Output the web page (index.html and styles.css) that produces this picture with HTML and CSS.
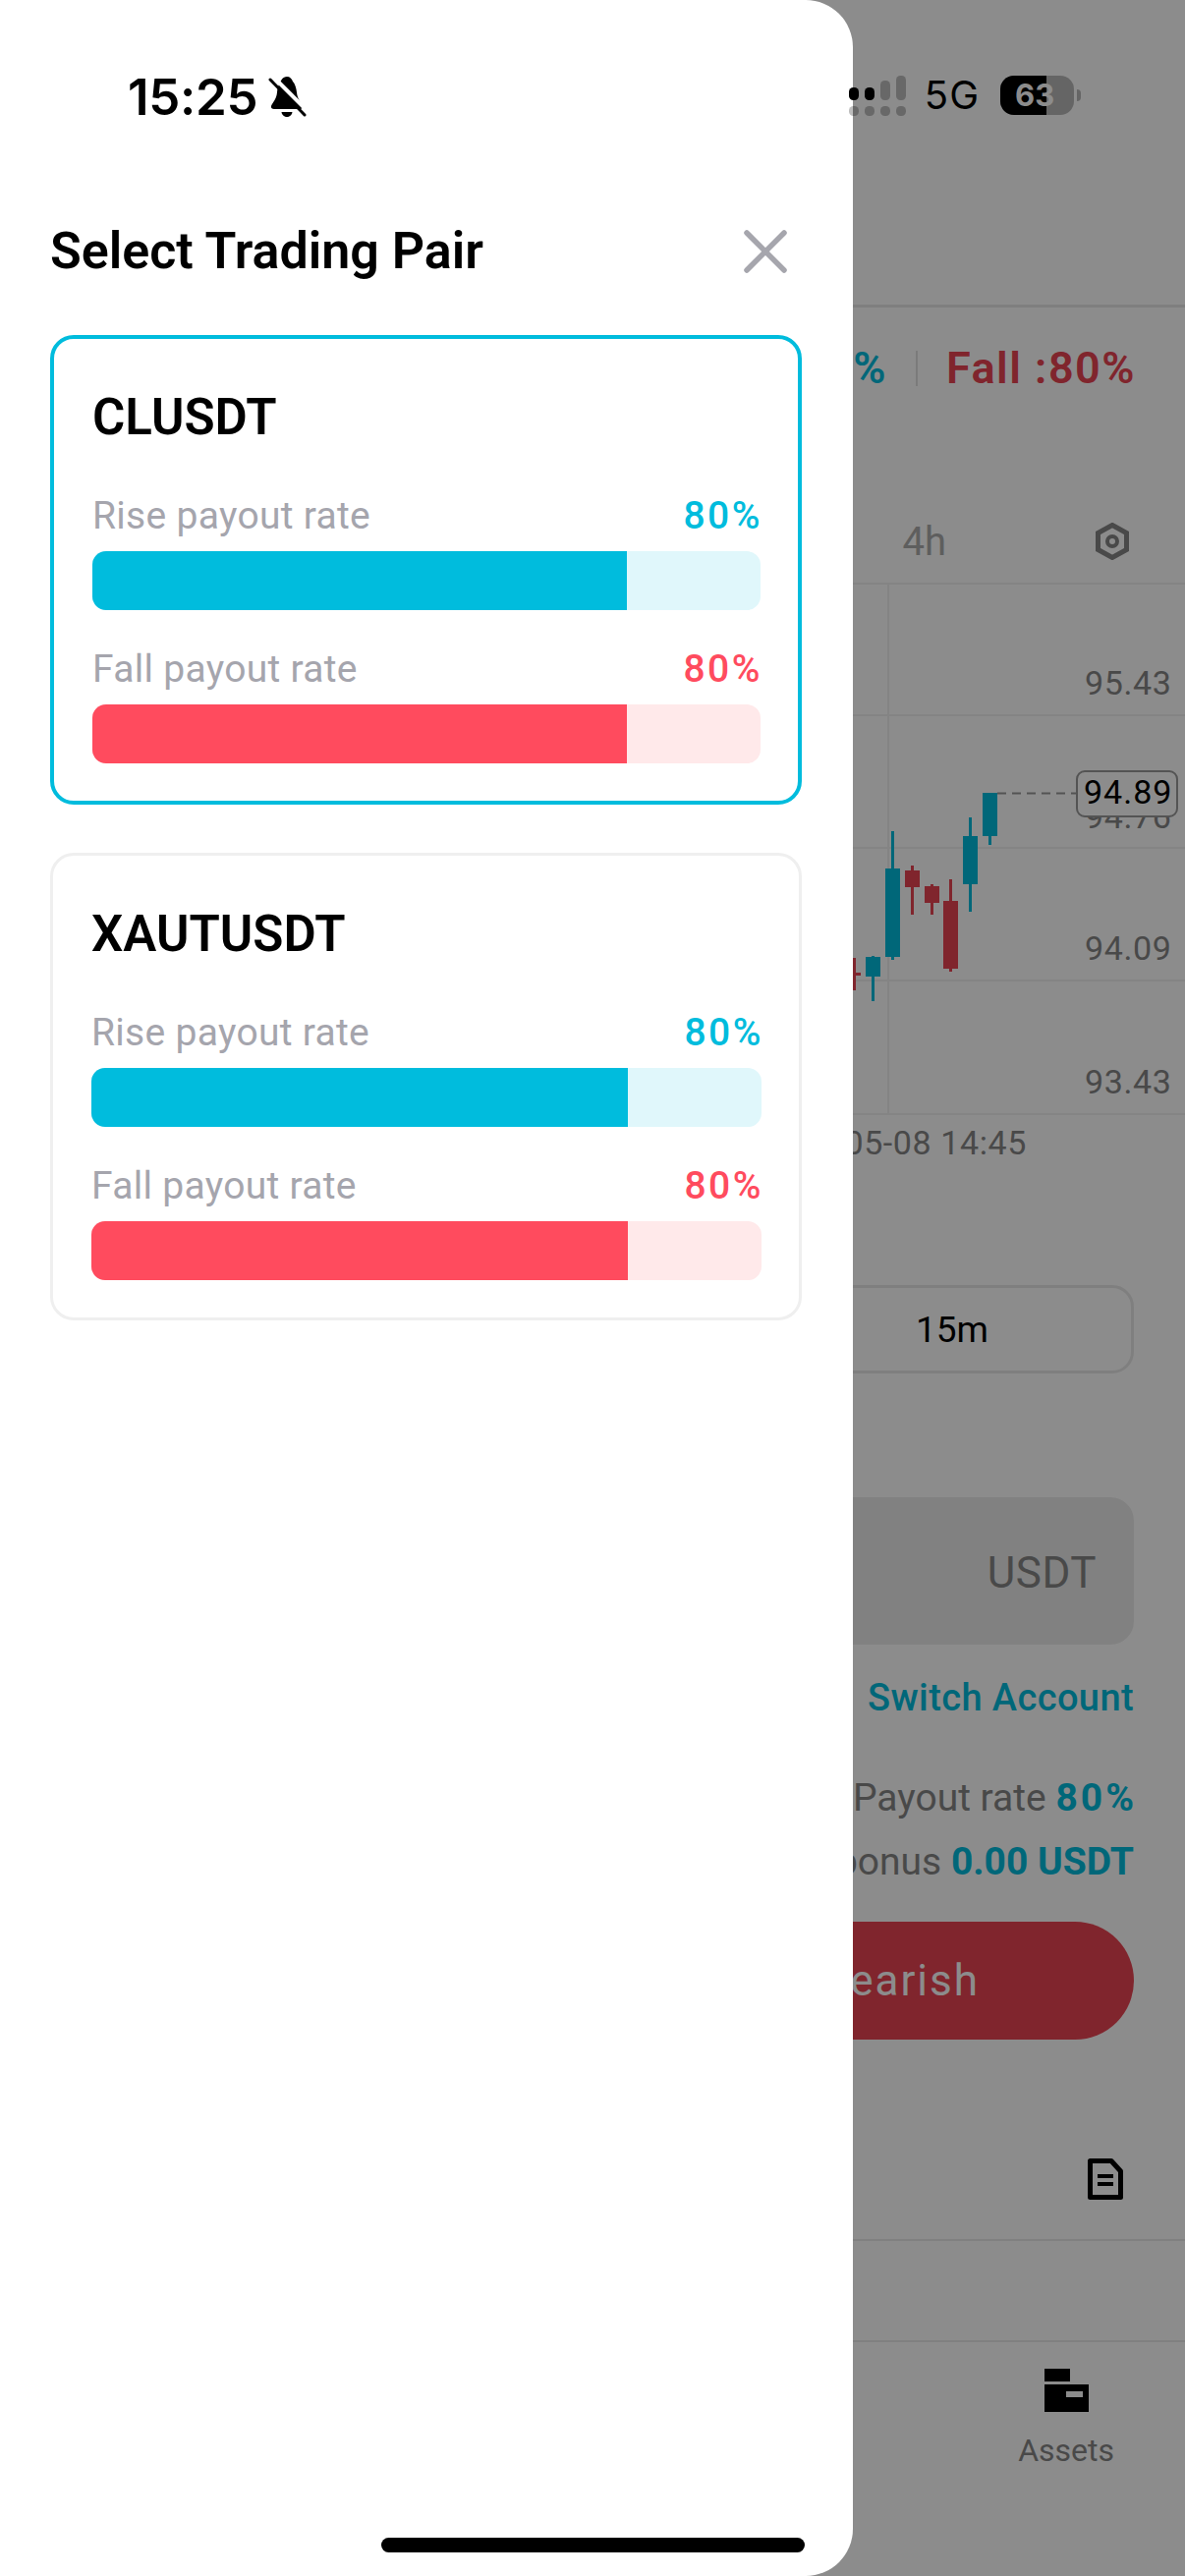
FILE: index.html
```html
<!DOCTYPE html>
<html>
<head>
    <title>Select Trading Pair</title>
    <link rel="stylesheet" href="styles.css">
</head>
<body>
    <div class="screen">
        <!-- the trading page behind the drawer -->
        <div class="app">
            <div class="app-header"></div>
            <div class="rates">
                <span class="rate-rise">Rise :80%</span>
                <span class="rate-divider"></span>
                <span class="rate-fall">Fall :80%</span>
            </div>
            <div class="tabs">
                <span class="tab">4h</span>
                <svg class="tab-icon" width="34" height="38" viewBox="0 0 34 38">
                    <path d="M17 2.5L31.5 10.5V27.5L17 35.5L2.5 27.5V10.5Z" fill="none" stroke="#868686" stroke-width="5"/>
                    <circle cx="17" cy="19" r="5" fill="none" stroke="#868686" stroke-width="4"/>
                </svg>
            </div>
            <svg class="chart" width="1206" height="600" viewBox="0 593 1206 600">
                <g stroke="#f0f0f0" stroke-width="2">
                    <line x1="868" y1="594" x2="1206" y2="594"/>
                    <line x1="868" y1="728" x2="1206" y2="728"/>
                    <line x1="868" y1="863" x2="1206" y2="863"/>
                    <line x1="868" y1="998" x2="1206" y2="998"/>
                    <line x1="868" y1="1134" x2="1206" y2="1134"/>
                    <line x1="904" y1="594" x2="904" y2="1134"/>
                </g>
                <g class="axis">
                    <text x="1104" y="707">95.43</text>
                    <text x="1104" y="843">94.76</text>
                    <text x="1104" y="977">94.09</text>
                    <text x="1104" y="1113">93.43</text>
                    <text x="1045" y="1175" text-anchor="end">05-08 14:45</text>
                </g>
                <g fill="#00bcdd">
                    <rect x="1000" y="807" width="15" height="44"/>
                    <rect x="1006" y="851" width="3" height="9"/>
                    <rect x="980" y="851" width="15" height="49"/>
                    <rect x="986" y="832" width="3" height="96"/>
                    <rect x="901" y="884" width="15" height="90"/>
                    <rect x="907" y="846" width="3" height="131"/>
                    <rect x="881" y="974" width="15" height="20"/>
                    <rect x="887" y="973" width="3" height="46"/>
                </g>
                <g fill="#ea4452">
                    <rect x="960" y="917" width="15" height="69"/>
                    <rect x="966" y="895" width="3" height="94"/>
                    <rect x="941" y="902" width="15" height="17"/>
                    <rect x="947" y="900" width="3" height="31"/>
                    <rect x="921" y="886" width="15" height="17"/>
                    <rect x="927" y="881" width="3" height="50"/>
                    <rect x="860" y="990" width="16" height="3"/>
                    <rect x="868" y="975" width="3" height="33"/>
                </g>
                <line x1="1015" y1="807.5" x2="1095" y2="807.5" stroke="#999" stroke-width="2" stroke-dasharray="9 6"/>
                <rect x="1096" y="785" width="102" height="46" rx="8" fill="#fff" stroke="#999" stroke-width="2"/>
                <text class="axis-now" x="1103" y="818">94.89</text>
            </svg>
            <div class="duration">
                <span class="duration-text">15m</span>
            </div>
            <div class="amount">USDT</div>
            <div class="switch-link">Switch Account</div>
            <div class="info-line">Payout rate <b class="percent">80%</b></div>
            <div class="info-line">Available bonus <b>0.00 USDT</b></div>
            <div class="trade-btn">Bearish</div>
            <div class="orders">
                <svg width="36" height="42" viewBox="0 0 36 42">
                    <path d="M2.5 2.5H24L33.5 13V39.5H2.5Z" fill="none" stroke="#000" stroke-width="5" stroke-linejoin="round"/>
                    <rect x="10" y="16" width="16" height="4"/>
                    <rect x="10" y="24" width="16" height="4"/>
                </svg>
            </div>
            <div class="empty-row"></div>
            <div class="nav">
                <span class="nav-item">Assets</span>
            </div>
        </div>
        <div class="nav-icon">
            <svg width="46" height="44" viewBox="0 0 46 44">
                <rect x="0" y="0" width="26" height="13"/>
                <path fill-rule="evenodd" d="M0 16H45V44H0ZM22 23V29H39V23Z"/>
            </svg>
        </div>
        <div class="overlay"></div>

        <!-- drawer -->
        <div class="drawer">
            <div class="drawer-head">
                <h1 class="drawer-title">Select Trading Pair</h1>
                <svg class="close" width="44" height="44" viewBox="0 0 44 44">
                    <path d="M3 3L41 41M41 3L3 41" stroke="#a6a6ad" stroke-width="5.5" stroke-linecap="round"/>
                </svg>
            </div>
            <div class="pair-card selected">
                <div class="pair-name">CLUSDT</div>
                <div class="rate-row">
                    <span class="rate-label">Rise payout rate</span>
                    <span class="rate-value rise">80%</span>
                </div>
                <div class="bar bar-rise"><div class="bar-fill" style="width: 80%"></div></div>
                <div class="rate-row">
                    <span class="rate-label">Fall payout rate</span>
                    <span class="rate-value fall">80%</span>
                </div>
                <div class="bar bar-fall"><div class="bar-fill" style="width: 80%"></div></div>
            </div>
            <div class="pair-card">
                <div class="pair-name">XAUTUSDT</div>
                <div class="rate-row">
                    <span class="rate-label">Rise payout rate</span>
                    <span class="rate-value rise">80%</span>
                </div>
                <div class="bar bar-rise"><div class="bar-fill" style="width: 80%"></div></div>
                <div class="rate-row">
                    <span class="rate-label">Fall payout rate</span>
                    <span class="rate-value fall">80%</span>
                </div>
                <div class="bar bar-fall"><div class="bar-fill" style="width: 80%"></div></div>
            </div>
        </div>

        <!-- phone status bar -->
        <div class="status-bar">
            <div class="status-left">
                <span class="status-time">15:25</span>
                <svg width="40" height="43" viewBox="0 0 40 43">
                    <path d="M20 1C23 1 25 3 26 6C28 8 29.5 12 30 17C30.5 24 35 28 36 31C36.5 33 35 34 33 34H7C5 34 3.5 33 4 31C5 28 9.5 24 10 17C10.5 10 14 5 15 3.5C16 2 18 1 20 1Z"/>
                    <path d="M14.5 37H25.5C25 40.5 22.5 42 20 42C17.5 42 15 40.5 14.5 37Z"/>
                    <path d="M6 1L40 35" stroke="#fff" stroke-width="4"/>
                    <path d="M3 4L38 40" stroke="#000" stroke-width="3" stroke-linecap="round"/>
                </svg>
            </div>
            <div class="status-right">
                <svg width="58" height="41" viewBox="0 0 58 41">
                    <rect x="0" y="12" width="10" height="13" rx="4.5"/>
                    <rect x="16" y="12" width="10" height="13" rx="4.5"/>
                    <g opacity="0.25">
                        <rect x="32" y="5" width="10" height="20" rx="4.5"/>
                        <rect x="48" y="0" width="10" height="25" rx="4.5"/>
                        <rect x="0" y="31" width="10" height="10" rx="4.5"/>
                        <rect x="16" y="31" width="10" height="10" rx="4.5"/>
                        <rect x="32" y="31" width="10" height="10" rx="4.5"/>
                        <rect x="48" y="31" width="10" height="10" rx="4.5"/>
                    </g>
                </svg>
                <span class="status-net">5G</span>
                <div class="battery">
                    <div class="battery-level" style="width: 63%"></div>
                    <span class="battery-text">63</span>
                </div>
                <div class="battery-nub"></div>
            </div>
        </div>

        <div class="home-bar"></div>
    </div>
</body>
</html>
```

FILE: styles.css
```css
/* Page frame */
html, body {
    margin: 0;
    padding: 0;
}

body {
    background-color: #fff;
    font-family: Roboto, Arial, sans-serif;
}

.screen {
    position: relative;
    width: 1206px;
    height: 2622px;
    overflow: hidden;
}

/* Trading page behind the drawer */
.app {
    position: absolute;
    top: 0;
    left: 0;
    width: 1206px;
    height: 2622px;
    background-color: #fff;
}

.app-header {
    height: 310px;
    border-bottom: 3px solid #e8e8e8;
}

.rates {
    display: flex;
    justify-content: flex-end;
    align-items: center;
    gap: 29px;
    height: 50px;
    margin-top: 37px;
    padding-right: 50px;
    font-size: 45px;
    font-weight: 600;
    letter-spacing: 1.5px;
    line-height: 50px;
}

.rate-rise {
    color: #00bcdd;
}

.rate-fall {
    color: #ea4452;
}

.rate-divider {
    width: 2px;
    height: 36px;
    background-color: #e0e0e0;
}

.tabs {
    display: flex;
    justify-content: flex-end;
    align-items: center;
    gap: 152px;
    height: 60px;
    margin-top: 121px;
    padding-right: 57px;
}

.tab {
    color: #ababab;
    font-size: 40px;
}

.chart {
    display: block;
    margin-top: 12px;
}

.axis text {
    fill: #868686;
    font-size: 34px;
    letter-spacing: 0.6px;
}

.axis-now {
    fill: #000;
    font-size: 34px;
    letter-spacing: 1px;
}

.duration {
    display: flex;
    justify-content: flex-end;
    align-items: center;
    box-sizing: border-box;
    width: 700px;
    height: 90px;
    margin: 115px 52px 0 auto;
    padding-right: 145px;
    border: 3px solid #e8e8e8;
    border-radius: 22px;
}

.duration-text {
    color: #000;
    font-size: 37px;
}

.amount {
    box-sizing: border-box;
    width: 700px;
    height: 150px;
    margin: 126px 52px 0 auto;
    padding-right: 38px;
    border-radius: 24px;
    background-color: #ebebeb;
    color: #868686;
    font-size: 44px;
    letter-spacing: 0.5px;
    line-height: 154px;
    text-align: right;
}

.switch-link {
    margin-top: 29px;
    padding-right: 52px;
    color: #00bcdd;
    font-size: 38px;
    font-weight: 500;
    letter-spacing: 0.4px;
    line-height: 50px;
    text-align: right;
}

.info-line {
    padding-right: 52px;
    color: #868686;
    font-size: 39px;
    line-height: 65px;
    text-align: right;
}

.info-line b {
    color: #00bcdd;
    font-weight: 700;
}

.info-line .percent {
    margin-right: -3px;
    letter-spacing: 3px;
}

.switch-link + .info-line {
    margin-top: 45px;
}

.trade-btn {
    box-sizing: border-box;
    width: 532px;
    height: 120px;
    margin: 28px 52px 0 auto;
    padding-right: 157px;
    border-radius: 60px;
    background-color: #ea4452;
    color: #fff;
    font-size: 44px;
    letter-spacing: 2px;
    line-height: 120px;
    text-align: right;
}

.orders {
    display: flex;
    justify-content: flex-end;
    align-items: center;
    box-sizing: border-box;
    height: 205px;
    padding: 80px 63px 0 0;
    border-bottom: 2px solid #eaeaea;
}

.empty-row {
    box-sizing: border-box;
    height: 103px;
    border-bottom: 2px solid #eaeaea;
}

.nav {
    padding: 91px 72px 0 0;
    text-align: right;
}

.nav-item {
    color: #868686;
    font-size: 32px;
}

.nav-icon {
    position: absolute;
    top: 2411px;
    left: 1063px;
}

.overlay {
    position: absolute;
    top: 0;
    left: 0;
    width: 1206px;
    height: 2622px;
    background-color: rgba(0, 0, 0, 0.45);
}

/* Drawer */
.drawer {
    position: absolute;
    top: 0;
    left: 0;
    box-sizing: border-box;
    width: 868px;
    height: 2622px;
    padding: 226px 52px 0 51px;
    border-radius: 0 48px 48px 0;
    background-color: #fff;
}

.drawer-head {
    display: flex;
    justify-content: space-between;
    align-items: center;
    height: 60px;
    margin-bottom: 55px;
    padding-right: 15px;
}

.drawer-title {
    margin: 0;
    color: #000;
    font-size: 52px;
    font-weight: 600;
    line-height: 60px;
}

/* Trading pair cards */
.pair-card {
    box-sizing: border-box;
    width: 765px;
    margin-bottom: 49px;
    padding: 50px 38px 38px 39px;
    border: 3px solid #efefef;
    border-radius: 24px;
}

.pair-card.selected {
    border: 4px solid #00bcdd;
}

.pair-name {
    margin-bottom: 47px;
    color: #000;
    font-size: 51px;
    font-weight: 600;
    line-height: 60px;
}

.rate-row {
    display: flex;
    justify-content: space-between;
    align-items: center;
    height: 46px;
    margin-bottom: 13px;
    font-size: 39px;
}

.rate-label {
    color: #a5a5ad;
    letter-spacing: 0.3px;
}

.rate-value {
    margin-right: -2px;
    font-weight: 500;
    letter-spacing: 2.5px;
}

.rate-value.rise {
    color: #00bcdd;
}

.rate-value.fall {
    color: #ff4b5e;
}

.bar {
    height: 60px;
    margin-bottom: 37px;
    border-radius: 14px;
    overflow: hidden;
}

.bar:last-child {
    margin-bottom: 0;
}

.bar-rise {
    background-color: #e0f7fb;
}

.bar-fall {
    background-color: #ffe9ea;
}

.bar-fill {
    height: 100%;
}

.bar-rise .bar-fill {
    background-color: #00bcdd;
}

.bar-fall .bar-fill {
    background-color: #ff4b5e;
}

/* Status bar and home indicator */
.status-bar {
    position: absolute;
    top: 77px;
    left: 130px;
    display: flex;
    justify-content: space-between;
    align-items: flex-start;
    width: 970px;
    height: 44px;
    font-family: Inter, Arial, sans-serif;
}

.status-left {
    display: flex;
    align-items: flex-start;
    gap: 10px;
}

.status-time {
    color: #000;
    font-size: 51px;
    font-weight: 600;
    letter-spacing: -0.3px;
    line-height: 44px;
}

.status-right {
    display: flex;
    align-items: flex-start;
    margin-left: auto;
}

.status-net {
    margin-left: 19px;
    color: #000;
    font-size: 40px;
    letter-spacing: 1px;
    line-height: 40px;
}

.battery {
    position: relative;
    width: 75px;
    height: 40px;
    margin-left: 21px;
    border-radius: 14px;
    background-color: rgba(0, 0, 0, 0.28);
    overflow: hidden;
}

.battery-level {
    height: 100%;
    background-color: #000;
}

.battery-text {
    position: absolute;
    top: 0;
    left: 15px;
    color: #8c8c8c;
    font-size: 31px;
    font-weight: 700;
    line-height: 40px;
}

.battery-nub {
    width: 4px;
    height: 12px;
    margin: 14px 0 0 3px;
    border-radius: 0 6px 6px 0;
    background-color: rgba(0, 0, 0, 0.28);
}

.home-bar {
    position: absolute;
    top: 2583px;
    left: 388px;
    width: 431px;
    height: 15px;
    border-radius: 8px;
    background-color: #000;
}
```
